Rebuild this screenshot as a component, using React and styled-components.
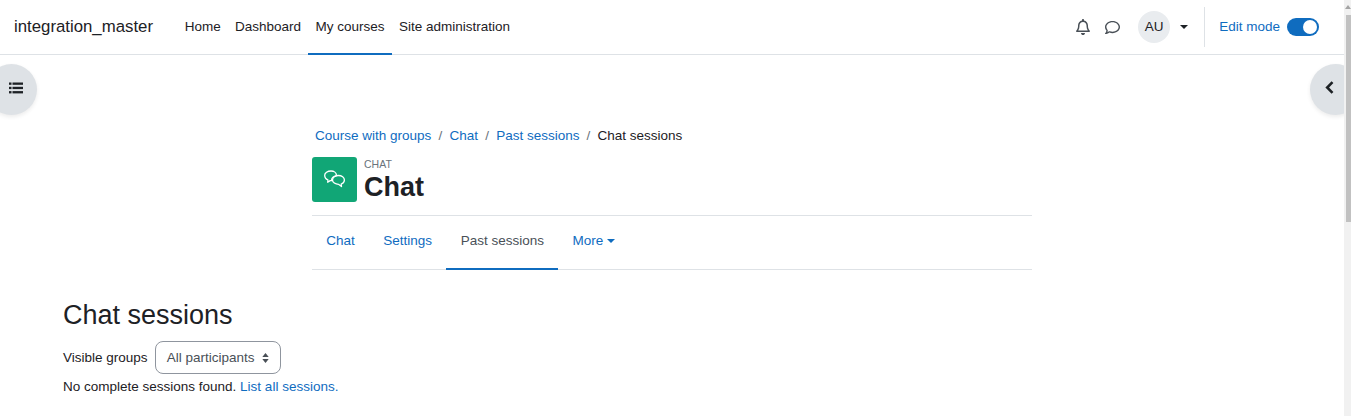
import styled, { createGlobalStyle } from "styled-components";
import { FaRegBell, FaRegComment } from "react-icons/fa6";

const GlobalStyle = createGlobalStyle`
html, body {
  margin: 0;
  padding: 0;
  height: 416px;
  overflow: hidden;
  background: #fff;
}
body {
  font-family: "Liberation Sans", Arial, sans-serif;
  font-size: 13.5px;
  line-height: 20px;
  color: #1d2125;
}
`

const Page = styled.div`
display: flex;
height: 416px;
`

const Viewport = styled.div`
position: relative;
flex: 1;
min-width: 0;
overflow: hidden;
`

const Scrollbar = styled.div`
width: 7px;
background: #f1f1f1;
display: flex;
flex-direction: column;
`

const ScrollTrackTop = styled.div`
height: 15px;
position: relative;
&::after {
  content: "";
  position: absolute;
  left: 1px;
  top: 5px;
  border-left: 3px solid transparent;
  border-right: 3px solid transparent;
  border-bottom: 4px solid #a3a3a3;
}
`

const ScrollThumb = styled.div`
height: 207px;
margin-left: 2px;
background: #c1c1c1;
`

const Navbar = styled.nav`
display: flex;
align-items: stretch;
height: 54px;
background: #fff;
border-bottom: 1px solid #dee2e6;
padding-left: 14px;
padding-right: 25px;
`

const Brand = styled.div`
display: flex;
align-items: center;
font-size: 16.8px;
margin-right: 24.5px;
`

const NavLinks = styled.div`
display: flex;
align-items: stretch;
`

const NavLink = styled.a`
display: flex;
align-items: center;
padding: 2px 7.2px 1px;
color: #1d2125;
border-bottom: 2px solid ${p => (p.$active ? "#0f6cbf" : "transparent")};
margin-bottom: -1px;
`

const UserArea = styled.div`
display: flex;
align-items: center;
margin-left: auto;
`

const IconButton = styled.span`
display: flex;
width: 16px;
justify-content: center;
margin-right: ${p => p.$gap}px;
color: #495057;
`

const Avatar = styled.div`
width: 32px;
height: 32px;
border-radius: 50%;
background: #e9ecef;
display: flex;
align-items: center;
justify-content: center;
`

const Caret = styled.span`
display: block;
border-top: ${p => p.$size || 4}px solid ${p => p.$color || "#1d2125"};
border-left: ${p => p.$size || 4}px solid transparent;
border-right: ${p => p.$size || 4}px solid transparent;
`

const UserCaret = styled.span`
margin-left: 10px;
margin-right: 16px;
`

const Divider = styled.div`
width: 1px;
height: 40px;
background: #dee2e6;
`

const EditMode = styled.div`
display: flex;
align-items: center;
margin-left: 14px;
color: #0f6cbf;
gap: 7px;
`

const Toggle = styled.span`
position: relative;
display: block;
width: 32px;
height: 18px;
border-radius: 9px;
background: #0f6cbf;
&::after {
  content: "";
  position: absolute;
  right: 2px;
  top: 2px;
  width: 14px;
  height: 14px;
  border-radius: 50%;
  background: #fff;
}
`

const DrawerToggle = styled.button`
position: absolute;
top: 64px;
width: 51px;
height: 51px;
padding: 0 0 4px;
border: 0;
border-radius: 50%;
background: #dee2e6;
box-shadow: 0 2px 4px rgba(0, 0, 0, 0.08);
display: flex;
align-items: center;
color: #1d2125;
${p => p.$side === "left"
    ? `left: -14px; justify-content: flex-end; padding-right: 14px;`
    : `right: -17px; justify-content: flex-start; padding-left: 15px;`}
`

const Content = styled.main`
padding-top: 71px;
`

const HeaderColumn = styled.div`
width: 720px;
margin-left: 312px;
`

const Breadcrumbs = styled.div`
display: flex;
padding-left: 3px;
height: 20px;
align-items: center;
`

const Crumb = styled.a`
color: ${p => (p.$current ? "#1d2125" : "#0f6cbf")};
`

const Sep = styled.span`
color: #6a737b;
padding: 0 7.2px;
`

const Heading = styled.div`
display: flex;
margin-top: 11px;
height: 45px;
`

const ActivityIcon = styled.div`
width: 45px;
height: 45px;
border-radius: 3px;
background: #11a676;
display: flex;
align-items: center;
justify-content: center;
margin-right: 7px;
`

const HeadingText = styled.div`
display: flex;
flex-direction: column;
`

const Eyebrow = styled.div`
font-size: 10.5px;
line-height: 13px;
color: #6a737b;
margin-top: 1px;
`

const PageTitle = styled.h1`
margin: 0;
font-size: 27px;
line-height: 32px;
font-weight: 700;
`

const Tabs = styled.div`
display: flex;
height: 53px;
margin-top: 13px;
border-top: 1px solid #dee2e6;
border-bottom: 1px solid #dee2e6;
`

const Tab = styled.a`
display: flex;
align-items: center;
gap: 4px;
padding: 0 14.4px 3px 14.2px;
margin-bottom: -1px;
color: ${p => (p.$active ? "#495057" : "#0f6cbf")};
border-bottom: 2px solid ${p => (p.$active ? "#0f6cbf" : "transparent")};
`

const Body = styled.section`
padding-left: 63px;
`

const SectionTitle = styled.h2`
margin: 28px 0 0;
font-size: 27px;
line-height: 34px;
font-weight: 400;
`

const FilterRow = styled.div`
display: flex;
align-items: center;
gap: 7.2px;
margin-top: 9px;
`

const SelectBox = styled.div`
display: flex;
align-items: center;
height: 31px;
padding: 0 11px;
gap: 7px;
border: 1px solid #8f959e;
border-radius: 8px;
color: #495057;
`

const UpDown = styled.svg`
width: 7px;
height: 12px;
`

const Message = styled.p`
margin: 3px 0 0;
`

const InlineLink = styled.a`
color: #0f6cbf;
`

const ListIcon = () => (
    <svg width="14" height="12" viewBox="0 0 14 12" fill="currentColor">
        <rect x="0" y="0.500" width="2.500" height="2.300" />
        <rect x="0" y="4.800" width="2.500" height="2.300" />
        <rect x="0" y="9.100" width="2.500" height="2.300" />
        <rect x="3.500" y="0.500" width="10.500" height="2.300" />
        <rect x="3.500" y="4.800" width="10.500" height="2.300" />
        <rect x="3.500" y="9.100" width="10.500" height="2.300" />
    </svg>
)

const ChevronLeft = () => (
    <svg width="9" height="13" viewBox="0 0 9 13" fill="none" stroke="currentColor" strokeWidth="2.600">
        <path d="M7.500 1.200 2.200 6.500l5.300 5.300" />
    </svg>
)

const ChatIcon = () => (
    <svg width="24" height="20" viewBox="0 0 24 20" fill="none" stroke="#fff" strokeWidth="1.300" strokeLinejoin="round">
        <path d="M8 1c3 0 5.400 1.800 5.400 4.100 0 .3 0 .5-.1.700-2.600.2-4.700 2-4.700 4.200 0 .2 0 .4.100.6-.5.100-1 .1-1.500 0L4.700 12.200l.2-2.300C3 9.200 1.700 7.400 1.700 5.300 1.700 3 4.500 1 8 1z" />
        <path d="M15.500 5.500c3.200 0 5.900 2 5.900 4.400 0 1.900-1.300 3.400-3.200 4.100l.3 2.600-3-2.300c-3.100 0-6-1.900-6-4.400s2.800-4.400 6-4.400z" />
    </svg>
)

export default function App() {
    return (
        <>
            <GlobalStyle />
            <Page>
                <Viewport>
                    <Navbar>
                        <Brand>integration_master</Brand>
                        <NavLinks>
                            <NavLink>Home</NavLink>
                            <NavLink>Dashboard</NavLink>
                            <NavLink $active>My courses</NavLink>
                            <NavLink>Site administration</NavLink>
                        </NavLinks>
                        <UserArea>
                            <IconButton $gap={13}><FaRegBell size={16} /></IconButton>
                            <IconButton $gap={18}><FaRegComment size={15} /></IconButton>
                            <Avatar>AU</Avatar>
                            <UserCaret><Caret /></UserCaret>
                            <Divider />
                            <EditMode>
                                Edit mode
                                <Toggle />
                            </EditMode>
                        </UserArea>
                    </Navbar>

                    <DrawerToggle $side="left"><ListIcon /></DrawerToggle>
                    <DrawerToggle $side="right"><ChevronLeft /></DrawerToggle>

                    <Content>
                        <HeaderColumn>
                            <Breadcrumbs>
                                <Crumb>Course with groups</Crumb>
                                <Sep>/</Sep>
                                <Crumb>Chat</Crumb>
                                <Sep>/</Sep>
                                <Crumb>Past sessions</Crumb>
                                <Sep>/</Sep>
                                <Crumb $current>Chat sessions</Crumb>
                            </Breadcrumbs>
                            <Heading>
                                <ActivityIcon><ChatIcon /></ActivityIcon>
                                <HeadingText>
                                    <Eyebrow>CHAT</Eyebrow>
                                    <PageTitle>Chat</PageTitle>
                                </HeadingText>
                            </Heading>
                            <Tabs>
                                <Tab>Chat</Tab>
                                <Tab>Settings</Tab>
                                <Tab $active>Past sessions</Tab>
                                <Tab>More <Caret $size={4} $color="#0f6cbf" /></Tab>
                            </Tabs>
                        </HeaderColumn>
                        <Body>
                            <SectionTitle>Chat sessions</SectionTitle>
                            <FilterRow>
                                Visible groups
                                <SelectBox>
                                    All participants
                                    <UpDown viewBox="0 0 7 12" fill="#495057">
                                        <path d="M3.500 1 6.700 5H.3zM3.500 11 .3 7h6.400z" />
                                    </UpDown>
                                </SelectBox>
                            </FilterRow>
                            <Message>
                                No complete sessions found. <InlineLink>List all sessions.</InlineLink>
                            </Message>
                        </Body>
                    </Content>
                </Viewport>
                <Scrollbar>
                    <ScrollTrackTop />
                    <ScrollThumb />
                </Scrollbar>
            </Page>
        </>
    )
}
